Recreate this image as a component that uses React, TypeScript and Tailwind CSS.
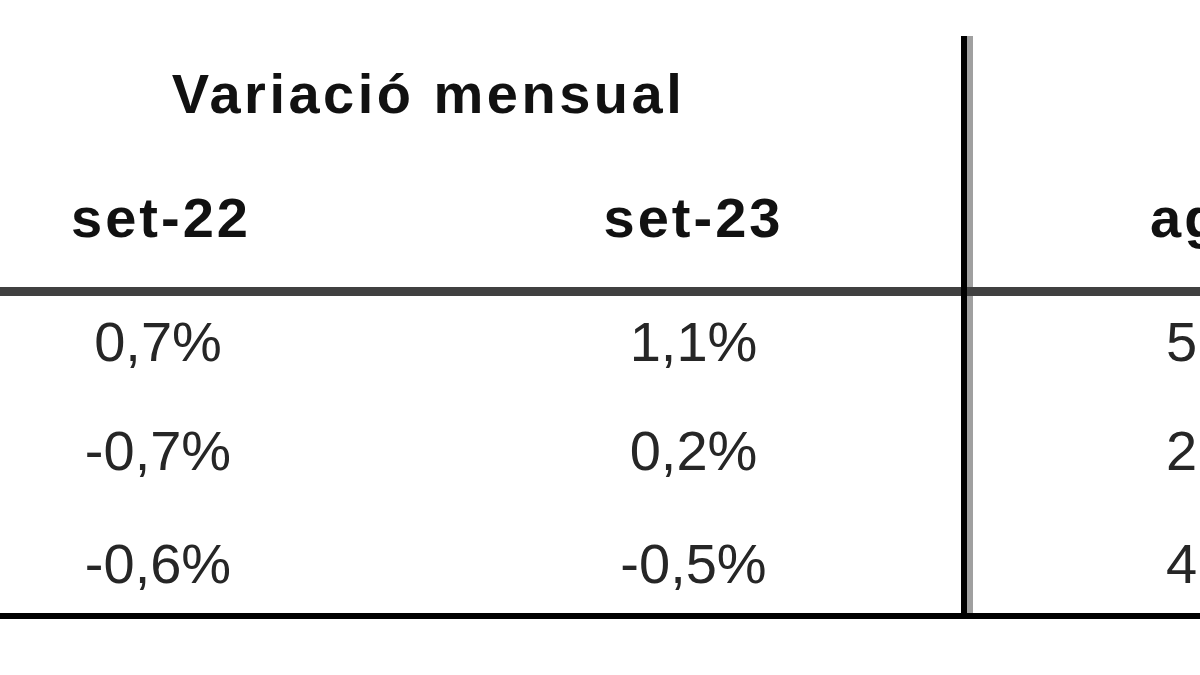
const rows = [
  { a: '0,7%', b: '1,1%', c: '5,4%', h: 'h-[109px]', pt: 'pt-[18px]' },
  { a: '-0,7%', b: '0,2%', c: '2,4%', h: 'h-[111px]', pt: 'pt-[18px]' },
  { a: '-0,6%', b: '-0,5%', c: '4,6%', h: 'h-[97px]', pt: 'pt-[20px]' },
];

export default function App() {
  return (
    <div className="h-[675px] w-[1200px] overflow-hidden bg-white pt-[36px] font-['Liberation_Sans',Arial,sans-serif]">
      {/* header: span title */}
      <div className="grid h-[117px] grid-cols-[961px_1fr]">
        <div className="pr-[104px] pt-[30px] text-center text-[56px] font-bold leading-none tracking-[3.5px] text-[#111]">
          Variació mensual
        </div>
        <div className="border-l-[6px] border-black shadow-[inset_6px_0_0_#a0a0a0]" />
      </div>

      {/* header: months */}
      <div className="grid h-[134px] grid-cols-[316px_645px_1fr]">
        <div className="pl-[6px] pt-[37px] text-center text-[56px] font-bold leading-none tracking-[3px] text-[#111]">set-22</div>
        <div className="pl-[110px] pt-[37px] text-center text-[56px] font-bold leading-none tracking-[3px] text-[#111]">set-23</div>
        <div className="overflow-hidden whitespace-nowrap border-l-[6px] border-black pl-[183px] pt-[37px] text-[56px] font-bold leading-none tracking-[3px] text-[#111] shadow-[inset_6px_0_0_#a0a0a0]">
          ago-23
        </div>
      </div>

      {/* thick rule under header */}
      <div className="grid h-[9px] grid-cols-[961px_1fr] bg-[#404040]">
        <div />
        <div className="border-l-[6px] border-black" />
      </div>

      {rows.map((r) => (
        <div key={r.a + r.b} className={`grid grid-cols-[316px_645px_1fr] text-[56px] leading-none text-[#262626] ${r.h}`}>
          <div className={`text-center ${r.pt}`}>{r.a}</div>
          <div className={`pl-[110px] text-center ${r.pt}`}>{r.b}</div>
          <div className={`overflow-hidden whitespace-nowrap border-l-[6px] border-black pl-[199px] shadow-[inset_6px_0_0_#a0a0a0] ${r.pt}`}>
            {r.c}
          </div>
        </div>
      ))}

      <div className="h-[6px] bg-black" />
    </div>
  );
}
